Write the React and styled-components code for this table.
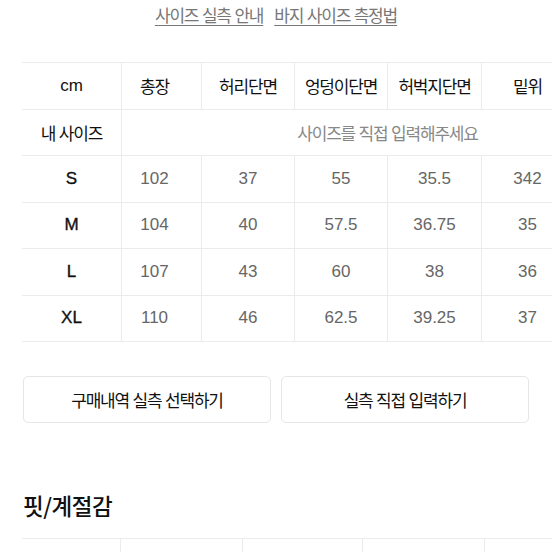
import React from 'react'
import styled, { createGlobalStyle } from 'styled-components'

const sizes = [
  { label: 'S', values: ['102', '37', '55', '35.5', '342'] },
  { label: 'M', values: ['104', '40', '57.5', '36.75', '35'] },
  { label: 'L', values: ['107', '43', '60', '38', '36'] },
  { label: 'XL', values: ['110', '46', '62.5', '39.25', '37'] },
]

const heads = ['총장', '허리단면', '엉덩이단면', '허벅지단면', '밑위']

const App = () => (
  <Page>
    <Global />
    <Links>
      <Link href="#">사이즈 실측 안내</Link>
      <Link href="#">바지 사이즈 측정법</Link>
    </Links>

    <Scroller>
      <SizeGrid>
        <Head>cm</Head>
        {heads.map((h, i) => (
          <Head key={h} $korean $lead={i === 0}>{h}</Head>
        ))}
        {/* more columns continue past the right edge */}
        <Head />
        <Head $korean>내 사이즈</Head>
        <Placeholder>사이즈를 직접 입력해주세요</Placeholder>
        {sizes.map((row) => (
          <React.Fragment key={row.label}>
            <RowLabel>{row.label}</RowLabel>
            {row.values.map((v, i) => (
              <Value key={i} $lead={i === 0}>{v}</Value>
            ))}
            <Value />
          </React.Fragment>
        ))}
      </SizeGrid>
    </Scroller>

    <Buttons>
      <Button>구매내역 실측 선택하기</Button>
      <Button>실측 직접 입력하기</Button>
    </Buttons>

    <Title>핏/계절감</Title>

    <Scroller>
      <FitGrid>
        <FitCell />
        <FitCell />
        <FitCell />
        <FitCell />
        <FitCell />
      </FitGrid>
    </Scroller>
  </Page>
)

export default App

const korean = `
  font-family: "Noto Sans CJK KR", sans-serif;
  font-size: 17px;
  letter-spacing: -1.2px;
  word-spacing: 1px;
`

const Global = createGlobalStyle`
  html, body {
    margin: 0;
    background: #fff;
    overflow: hidden;
  }
  body {
    font-family: "Liberation Sans", "Noto Sans CJK KR", sans-serif;
  }
`

const Page = styled.div`
  width: 552px;
  padding-top: 3px;
`

const Links = styled.div`
  display: flex;
  justify-content: center;
  gap: 11px;
  line-height: 24px;
`

const Link = styled.a`
  ${korean}
  color: #777;
  text-decoration: underline;
  text-underline-offset: 3px;
  text-decoration-thickness: 1px;
`

const Scroller = styled.div`
  padding-left: 22px;
  overflow: hidden;
`

const SizeGrid = styled.div`
  margin-top: 35px;
  display: grid;
  grid-template-columns: 100px 80px 93px 93px 94px 92px 92px;
  grid-auto-rows: 46.5px;
  width: max-content;
  border-top: 1px solid #ebebeb;
`

const Cell = styled.div`
  display: flex;
  align-items: center;
  justify-content: center;
  box-sizing: border-box;
  border-bottom: 1px solid #ebebeb;
  border-right: 1px solid #ebebeb;
  padding-right: ${(p) => (p.$lead ? '14px' : '0')};
`

const Head = styled(Cell)`
  font-size: 17px;
  color: #111;
  ${(p) => (p.$korean ? korean : '')}
`

const Placeholder = styled(Cell)`
  grid-column: span 6;
  ${korean}
  color: #888;
  padding-right: 12px;
`

const RowLabel = styled(Cell)`
  font-size: 17px;
  color: #111;
  -webkit-text-stroke: 0.35px #111;
`

const Value = styled(Cell)`
  font-size: 17px;
  color: #666;
`

const Buttons = styled.div`
  margin-top: 34px;
  padding: 0 23px;
  display: grid;
  grid-template-columns: 1fr 1fr;
  gap: 10px;
`

const Button = styled.button`
  height: 47px;
  background: #fff;
  border: 1px solid #e6e6e6;
  border-radius: 5px;
  ${korean}
  color: #111;
  padding: 0;
`

const Title = styled.h2`
  margin: 68px 0 0 23px;
  font-family: "Noto Sans CJK KR", sans-serif;
  font-size: 22.5px;
  font-weight: 500;
  letter-spacing: -0.5px;
  line-height: 28px;
  color: #111;
`

const FitGrid = styled.div`
  margin-top: 19px;
  display: grid;
  grid-template-columns: 99px 122px 120px 122px 122px;
  grid-auto-rows: 60px;
  width: max-content;
  border-top: 1px solid #ebebeb;
`

const FitCell = styled.div`
  border-right: 1px solid #ebebeb;
`
